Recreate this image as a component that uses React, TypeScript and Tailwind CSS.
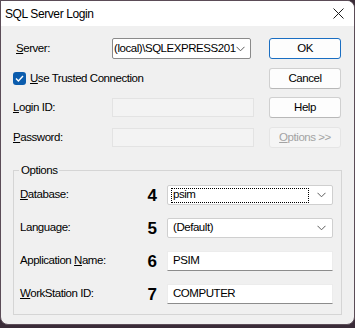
function Chevron() {
  return (
    <svg width="9" height="6" viewBox="0 0 9 6" className="shrink-0">
      <polyline points="0.5,0.8 4.5,4.8 8.5,0.8" fill="none" stroke="#5c5c5c" strokeWidth="1" />
    </svg>
  );
}

function Btn({ children, primary, disabled }: { children: React.ReactNode; primary?: boolean; disabled?: boolean }) {
  const base = "h-[21px] w-[72px] flex items-center justify-center rounded-[3px]";
  if (disabled) return <div className={`${base} border border-[#e5e5e5] bg-[#f5f5f5] text-[#a3a3a3]`}>{children}</div>;
  if (primary) return <div className={`${base} border border-[#1a6ec2] bg-[#fdfdfd] text-black`}>{children}</div>;
  return <div className={`${base} border border-[#d0d0d0] border-b-[#b8b8b8] bg-[#fdfdfd] text-black`}>{children}</div>;
}

function OptRow({ label, num, children }: { label: React.ReactNode; num: string; children: React.ReactNode }) {
  return (
    <div className="flex h-[20px] items-center">
      <div className="flex-1 text-black">{label}</div>
      <div className="mr-[10px] text-[17px] font-bold leading-none tracking-normal text-black">{num}</div>
      {children}
    </div>
  );
}

export default function App() {
  return (
    <div className="h-[328px] w-[355px] bg-[#3a2c38] font-['Liberation_Sans',Arial,sans-serif] text-[11.5px] tracking-[-0.45px]">
      <div className="flex h-[325px] flex-col overflow-hidden rounded-tr-[8px] rounded-b-[8px] border border-[#5b4c57] bg-[#f0f0f0]">
        {/* title bar */}
        <div className="flex h-[25px] shrink-0 items-center justify-between bg-white pl-[4px] pr-[10px]">
          <span className="text-[12px] tracking-[-0.4px] text-black">SQL Server Login</span>
          <svg width="11" height="11" viewBox="0 0 11 11">
            <path d="M0.5 0.5 L10.5 10.5 M10.5 0.5 L0.5 10.5" stroke="#1a1a1a" strokeWidth="1" />
          </svg>
        </div>

        <div className="flex flex-1 flex-col pl-[11px] pr-[13px]">
          {/* top section */}
          <div className="mt-[12px] flex">
            <div className="flex flex-1 flex-col text-black">
              <div className="flex h-[21px] items-center">
                <span className="w-[100px] pl-[4px]"><u>S</u>erver:</span>
                <div className="flex h-[21px] w-[139px] items-center justify-between rounded-[2px] border border-[#8a8a8a] bg-white pl-[1px] pr-[5px]">
                  <span>(local)\SQLEXPRESS201</span>
                  <Chevron />
                </div>
              </div>
              <div className="mt-[9px] flex h-[21px] items-center">
                <div className="ml-[1px] flex h-[13px] w-[13px] items-center justify-center rounded-[3px] bg-[#0b5cad]">
                  <svg width="9" height="7" viewBox="0 0 9 7">
                    <polyline points="1,3.6 3.4,6 8,1" fill="none" stroke="white" strokeWidth="1.4" />
                  </svg>
                </div>
                <span className="ml-[4px]"><u>U</u>se Trusted Connection</span>
              </div>
              <div className="mt-[8px] flex h-[21px] items-center">
                <span className="w-[100px] pl-[1px]"><u>L</u>ogin ID:</span>
                <div className="h-[19px] w-[142px] border border-[#e3e3e3] bg-[#f3f3f3]" />
              </div>
              <div className="mt-[9px] flex h-[21px] items-center">
                <span className="w-[100px] pl-[1px]"><u>P</u>assword:</span>
                <div className="h-[19px] w-[142px] border border-[#e3e3e3] bg-[#f3f3f3]" />
              </div>
            </div>
            <div className="flex w-[72px] flex-col">
              <Btn primary>OK</Btn>
              <div className="mt-[9px]"><Btn>Cancel</Btn></div>
              <div className="mt-[8px]"><Btn>Help</Btn></div>
              <div className="mt-[9px]"><Btn disabled><u>O</u>ptions &gt;&gt;</Btn></div>
            </div>
          </div>

          {/* options group */}
          <fieldset className="mt-[15px] ml-[1px] mr-[-1px] border border-[#d5d5d5] pb-[10px] pl-[6px] pr-[8px]">
            <legend className="ml-[-1px] px-[2px] leading-[14px] text-black">Options</legend>
            <div className="mt-[8px] flex flex-col gap-[13px]">
              <OptRow label={<><u>D</u>atabase:</>} num="4">
                <div className="flex h-[20px] w-[166px] items-center rounded-[2px] border border-[#cfcfcf] bg-white pl-[3px] pr-[6px]">
                  <div className="flex h-[15px] flex-1 items-center border border-dotted border-black pl-[1px] text-black">psim</div>
                  <div className="ml-[8px]"><Chevron /></div>
                </div>
              </OptRow>
              <OptRow label={<>Lan<u>g</u>uage:</>} num="5">
                <div className="flex h-[20px] w-[166px] items-center justify-between rounded-[2px] border border-[#cfcfcf] bg-white pl-[5px] pr-[6px] text-black">
                  <span>(Default)</span>
                  <Chevron />
                </div>
              </OptRow>
              <OptRow label={<>Application <u>N</u>ame:</>} num="6">
                <div className="flex h-[20px] w-[166px] items-center border border-[#ececec] border-b-[#8c8c8c] bg-white pl-[5px] text-black">PSIM</div>
              </OptRow>
              <OptRow label={<><u>W</u>orkStation ID:</>} num="7">
                <div className="flex h-[20px] w-[166px] items-center border border-[#ececec] border-b-[#8c8c8c] bg-white pl-[5px] text-black">COMPUTER</div>
              </OptRow>
            </div>
          </fieldset>
        </div>
      </div>
    </div>
  );
}
